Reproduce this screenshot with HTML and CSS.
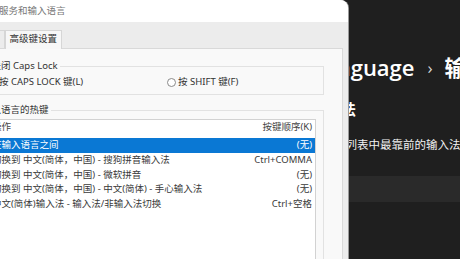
FILE: index.html
```html
<!DOCTYPE html>
<html lang="zh-CN">
<head>
    <meta charset="UTF-8">
    <meta name="viewport" content="width=device-width, initial-scale=1.0">
    <title>文本服务和输入语言</title>
    <link rel="stylesheet" href="styles.css">
</head>
<body>
    <div class="settings">
        <h1 class="crumb">Language<span class="sep">›</span>输入法</h1>
        <h2 class="section">输入法</h2>
        <p class="desc">于语言列表中最靠前的输入法，请在此处选择</p>
        <div class="card"></div>
    </div>

    <div class="dialog">
        <div class="titlebar">文本服务和输入语言</div>
        <div class="tabs">
            <div class="tab">语言栏</div>
            <div class="tab active">高级键设置</div>
        </div>
        <div class="panel">
            <fieldset class="group caps">
                <legend>要关闭 Caps Lock</legend>
                <div class="radios">
                    <label class="radio"><span class="dot checked"></span>按 CAPS LOCK 键(L)</label>
                    <label class="radio"><span class="dot"></span>按 SHIFT 键(F)</label>
                </div>
            </fieldset>
            <fieldset class="group hotkeys">
                <legend>输入语言的热键</legend>
                <div class="group-body">
                    <div class="list">
                        <div class="list-head">
                            <span>操作</span>
                            <span>按键顺序(K)</span>
                        </div>
                        <div class="row selected">
                            <span>在输入语言之间</span>
                            <span>(无)</span>
                        </div>
                        <div class="row">
                            <span>切换到 中文(简体，中国) - 搜狗拼音输入法</span>
                            <span>Ctrl+COMMA</span>
                        </div>
                        <div class="row">
                            <span>切换到 中文(简体，中国) - 微软拼音</span>
                            <span>(无)</span>
                        </div>
                        <div class="row">
                            <span>切换到 中文(简体，中国) - 中文(简体) - 手心输入法</span>
                            <span>(无)</span>
                        </div>
                        <div class="row">
                            <span>中文(简体)输入法 - 输入法/非输入法切换</span>
                            <span>Ctrl+空格</span>
                        </div>
                    </div>
                </div>
            </fieldset>
        </div>
    </div>
</body>
</html>
```

FILE: styles.css
```css
body {
    margin: 0;
    width: 460px;
    height: 259px;
    overflow: hidden;
    position: relative;
    background-color: #1f1f1f;
    font-family: 'Noto Sans', 'Noto Sans CJK SC', sans-serif;
}

/* settings page behind the dialog */
.settings {
    padding: 52px 0 0 309px;
    color: #fff;
    white-space: nowrap;
}
.crumb {
    margin: 0 0 0 3px;
    font-family: 'Open Sans', 'Noto Sans CJK SC', sans-serif;
    font-size: 22px;
    font-weight: 600;
    line-height: 30px;
}
.crumb .sep {
    display: inline-block;
    margin: 0 12px 0 13px;
    font-size: 17px;
    font-weight: 400;
    color: #d8d8d8;
    vertical-align: 2px;
}
.section {
    margin: 16px 0 0 2px;
    font-family: 'Noto Sans CJK SC', sans-serif;
    font-size: 15px;
    font-weight: 700;
    line-height: 20px;
}
.desc {
    margin: 17px 0 0 2px;
    font-family: 'Noto Sans CJK SC', sans-serif;
    font-size: 11.5px;
    line-height: 16px;
    color: #f2f2f2;
}
.card {
    margin: 24px 0 0 2px;
    height: 26px;
    background: #2a2a2a;
}

/* the dialog window */
.dialog {
    position: absolute;
    left: -40px;
    top: 0;
    width: 388px;
    height: 300px;
    background: #ececec;
    border-top-right-radius: 8px;
    overflow: hidden;
    box-shadow: 1px 0 0 #9a9a9a;
    font-size: 9.5px;
    color: #333;
}
.titlebar {
    height: 22px;
    line-height: 22px;
    padding-left: 20px;
    background: #fff;
    color: #777;
}
.tabs {
    height: 26px;
    display: flex;
    align-items: flex-end;
    padding-left: 2px;
    box-sizing: border-box;
}
.tab {
    height: 17px;
    line-height: 16px;
    padding: 0 8px 0 4px;
    border: 1px solid #d6d6d6;
    border-bottom: none;
    background: #ececec;
    color: #555;
}
.tab.active {
    height: 18px;
    padding: 0 4px;
    background: #f7f7f7;
    color: #333;
    position: relative;
    top: 1px;
}
.panel {
    margin: 0 5px 0 6px;
    height: 260px;
    padding-top: 11px;
    box-sizing: border-box;
    background: #f9f9f9;
    border: 1px solid #d9d9d9;
}

.group {
    margin: 0 18px 0 7px;
    padding: 0;
    min-width: 0;
    border: 1px solid #e2e2e2;
}
.group legend {
    margin-left: 5px;
    padding: 0 2px;
    line-height: 12px;
}
.caps {
    margin-bottom: 9px;
}
.radios {
    display: grid;
    grid-template-columns: 179px auto;
    padding: 4px 0 6px 13px;
    line-height: 12px;
}
.radio {
    display: flex;
    align-items: center;
}
.dot {
    width: 7px;
    height: 7px;
    margin-right: 2px;
    border: 1px solid #8a8a8a;
    border-radius: 50%;
    background: #fff;
    position: relative;
}
.dot.checked::after {
    content: "";
    position: absolute;
    left: 2px;
    top: 2px;
    width: 3px;
    height: 3px;
    border-radius: 50%;
    background: #333;
}

.group-body {
    padding: 3px 7px 0 11px;
}
.list {
    height: 160px;
    background: #fff;
    border: 1px solid #d2d2d2;
}
.list-head,
.row {
    display: flex;
    justify-content: space-between;
    padding: 0 3px 0 5px;
    white-space: nowrap;
}
.list-head {
    height: 14px;
    line-height: 14px;
    margin-bottom: 4px;
    color: #444;
}
.row {
    height: 14.8px;
    line-height: 14.8px;
    color: #3a3a3a;
}
.row.selected {
    background: #0a78d4;
    color: #fff;
}
```
